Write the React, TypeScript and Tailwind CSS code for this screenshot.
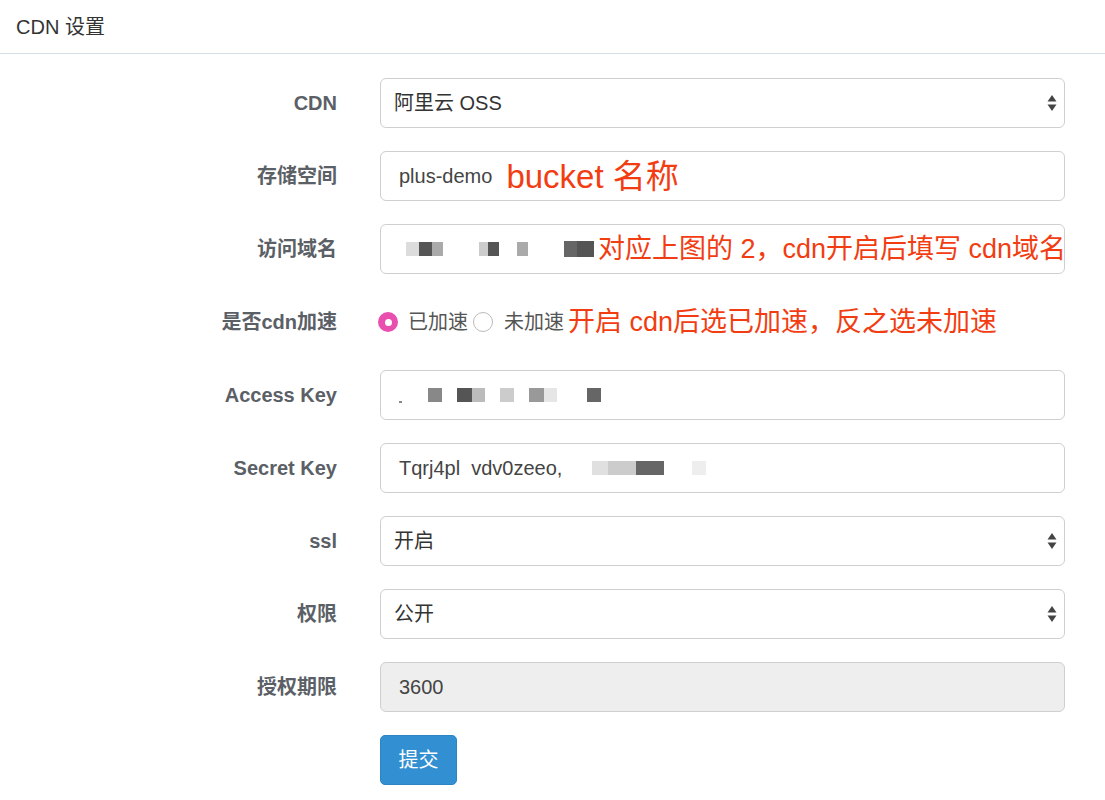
import React from "react";

const font = { fontFamily: '"Liberation Sans", "Noto Sans CJK SC", sans-serif' };

function Label({ children }: { children: React.ReactNode }) {
  return (
    <div className="w-[337px] shrink-0 text-right font-bold text-[20px] text-[#5b6066]">
      {children}
    </div>
  );
}

function Arrows() {
  return (
    <svg width="12" height="22" viewBox="0 0 12 22" className="shrink-0">
      <path d="M6 3 L10.5 9.5 H1.5 Z" fill="#444" />
      <path d="M6 19 L10.5 12.5 H1.5 Z" fill="#444" />
    </svg>
  );
}

function Row({ label, children }: { label: string; children: React.ReactNode }) {
  return (
    <div className="flex items-center h-[50px]">
      <Label>{label}</Label>
      <div className="ml-[43px] w-[685px]">{children}</div>
    </div>
  );
}

function Select({ value }: { value: string }) {
  return (
    <div className="h-[50px] w-full rounded-[6px] border border-[#cfcfcf] bg-white flex items-center pl-[13px] pr-[6px] text-[20px] text-[#333]">
      <span className="flex-1">{value}</span>
      <Arrows />
    </div>
  );
}

function Box({ children, disabled }: { children?: React.ReactNode; disabled?: boolean }) {
  return (
    <div
      className={
        "h-[50px] w-full rounded-[6px] border border-[#cfcfcf] flex items-center pl-[18px] text-[20px] text-[#444] overflow-hidden " +
        (disabled ? "bg-[#eeeeee]" : "bg-white")
      }
    >
      {children}
    </div>
  );
}

function Blk({ w, c, h = 14, mt = 0 }: { w: number; c: string; h?: number; mt?: number }) {
  return (
    <span
      className="inline-block shrink-0"
      style={{ width: w, height: h, background: c, marginTop: mt }}
    />
  );
}

export default function App() {
  return (
    <div className="w-[1105px] h-[800px] bg-white overflow-hidden" style={font}>
      <div className="h-[54px] border-b border-[#d5dfe8] flex items-center pl-[16px] text-[20px] text-[#333]">
        CDN 设置
      </div>
      <div className="pt-[24px] flex flex-col gap-[23px]">
        <Row label="CDN">
          <Select value="阿里云 OSS" />
        </Row>
        <Row label="存储空间">
          <Box>
            <span>plus-demo</span>
            <span className="ml-[14px] text-[33px] text-[#f23d12] leading-none">bucket 名称</span>
          </Box>
        </Row>
        <Row label="访问域名">
          <Box>
            <div className="flex items-center ml-[7px] gap-0">
              <Blk w={13} c="#dcdcdc" />
              <Blk w={13} c="#555" />
              <Blk w={11} c="#aaa" />
              <span className="w-[36px]" />
              <Blk w={9} c="#ccc" />
              <Blk w={11} c="#555" />
              <span className="w-[18px]" />
              <Blk w={11} c="#aaa" />
              <span className="w-[36px]" />
              <Blk w={13} c="#666" h={16} />
              <Blk w={17} c="#555" h={16} />
            </div>
            <span className="ml-[4px] text-[27px] text-[#f23d12] leading-none whitespace-nowrap">
              对应上图的 2，cdn开启后填写 cdn域名
            </span>
          </Box>
        </Row>
        <Row label="是否cdn加速">
          <div className="flex items-center text-[20px] text-[#555] -ml-[2px]">
            <span className="w-[20px] h-[20px] rounded-full bg-[#e84fae] flex items-center justify-center">
              <span className="w-[7px] h-[7px] rounded-full bg-white" />
            </span>
            <span className="ml-[10px]">已加速</span>
            <span className="ml-[5px] w-[20px] h-[20px] rounded-full border border-[#bbb] bg-white" />
            <span className="ml-[11px]">未加速</span>
            <span className="ml-[4px] text-[27px] text-[#f23d12] leading-none whitespace-nowrap">
              开启 cdn后选已加速，反之选未加速
            </span>
          </div>
        </Row>
        <Row label="Access Key">
          <Box>
            <div className="flex items-center">
              <Blk w={3} c="#888" h={2} mt={14} />
              <span className="w-[26px]" />
              <Blk w={14} c="#888" />
              <span className="w-[15px]" />
              <Blk w={15} c="#555" />
              <Blk w={13} c="#bbb" />
              <span className="w-[15px]" />
              <Blk w={14} c="#ccc" />
              <span className="w-[15px]" />
              <Blk w={15} c="#999" />
              <Blk w={13} c="#e6e6e6" />
              <span className="w-[30px]" />
              <Blk w={14} c="#666" />
            </div>
          </Box>
        </Row>
        <Row label="Secret Key">
          <Box>
            <div className="flex items-center">
              <span className="text-[#444] whitespace-nowrap">Tqrj4pl&nbsp;&nbsp;vdv0zeeo,</span>
              <span className="w-[30px]" />
              <Blk w={16} c="#e0e0e0" />
              <Blk w={28} c="#ccc" />
              <Blk w={28} c="#666" />
              <span className="w-[28px]" />
              <Blk w={14} c="#eee" />
            </div>
          </Box>
        </Row>
        <Row label="ssl">
          <Select value="开启" />
        </Row>
        <Row label="权限">
          <Select value="公开" />
        </Row>
        <Row label="授权期限">
          <Box disabled>3600</Box>
        </Row>
        <div className="flex items-center h-[50px]">
          <div className="w-[337px] shrink-0" />
          <button className="ml-[43px] h-[50px] w-[77px] rounded-[5px] bg-[#3290d2] border border-[#2d84c2] text-white text-[20px]">
            提交
          </button>
        </div>
      </div>
    </div>
  );
}
